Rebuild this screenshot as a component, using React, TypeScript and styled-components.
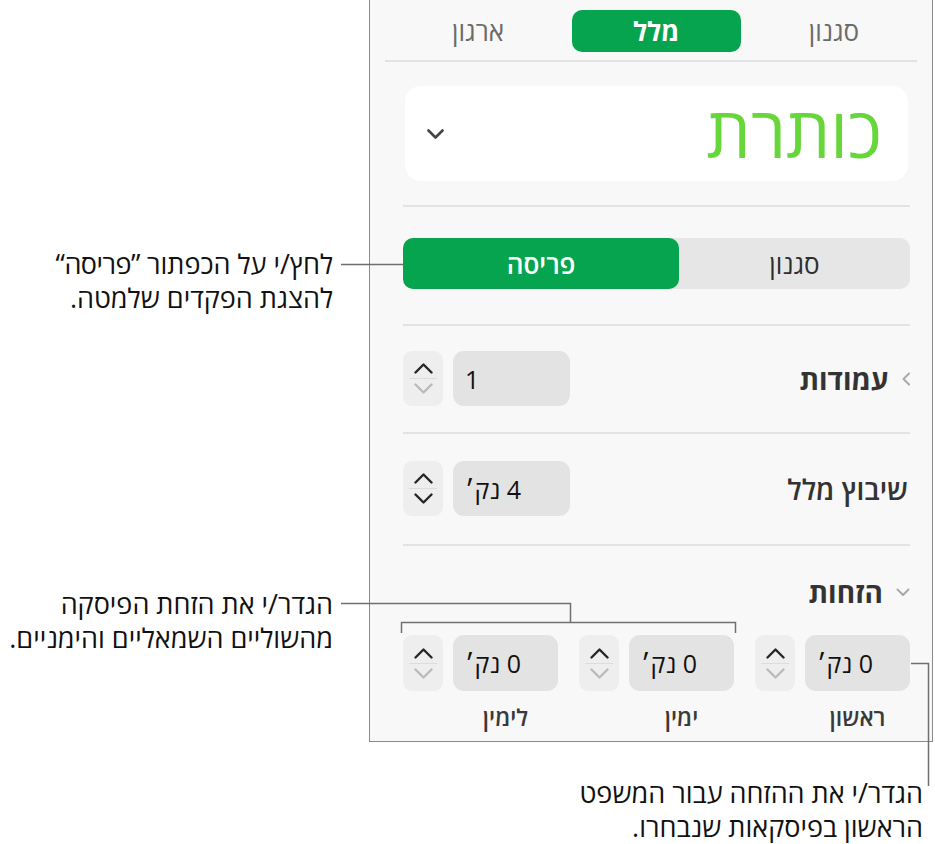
import React from "react";
import styled, { createGlobalStyle } from "styled-components";

const Global = createGlobalStyle`
  html, body { margin: 0; padding: 0; background: #ffffff; }
  body { font-family: "Open Sans", "Liberation Sans", "DejaVu Sans", sans-serif; }
`;

const Page = styled.div`
  position: relative;
  width: 935px;
  height: 844px;
  background: #ffffff;
  overflow: hidden;
`;

const Panel = styled.div`
  margin-left: 369px;
  width: 564px;
  height: 742px;
  box-sizing: border-box;
  background: #f8f8f8;
  border-left: 1.5px solid #8a8a8a;
  border-right: 1.5px solid #8a8a8a;
  border-bottom: 1.5px solid #8a8a8a;
  direction: rtl;
  display: flex;
  flex-direction: column;
  & > * { flex: none; }
`;

const TabBar = styled.div`
  display: grid;
  grid-template-columns: repeat(3, 169px);
  justify-content: center;
  column-gap: 9px;
  padding: 10px 0 0 10px;
`;

const Tab = styled.div<{ $active?: boolean }>`
  height: 42px;
  border-radius: 10px;
  display: flex;
  align-items: center;
  justify-content: center;
  font-size: 26px;
  font-weight: ${(p) => (p.$active ? 700 : 400)};
  color: ${(p) => (p.$active ? "#ffffff" : "#6b6b6b")};
  background: ${(p) => (p.$active ? "#07a44f" : "transparent")};
`;

const Rule = styled.div<{ $top: number; $side?: number }>`
  height: 2px;
  background: #e3e3e3;
  margin-top: ${(p) => p.$top}px;
  margin-left: ${(p) => p.$side ?? 0}px;
  margin-right: ${(p) => p.$side ?? 0}px;
  flex: none;
`;

const TitleCard = styled.div`
  margin: 24px 24px 0 35px;
  height: 95px;
  background: #ffffff;
  border-radius: 16px;
  display: flex;
  align-items: center;
  justify-content: space-between;
  padding: 0 26px 0 22px;
  box-sizing: border-box;
`;

const TitleText = styled.div`
  font-size: 70px;
  font-weight: 400;
  color: #66d63a;
  line-height: 1;
  margin-top: -6px;
`;

const Section = styled.div`
  padding: 0 22px 0 33px;
  display: flex;
  flex-direction: column;
  & > * { flex: none; }
`;

const Segmented = styled.div`
  margin-top: 31px;
  height: 51px;
  display: grid;
  grid-template-columns: 231px 1fr;
  background: #e6e6e6;
  border-radius: 10px;
`;

const Segment = styled.div<{ $active?: boolean }>`
  display: flex;
  align-items: center;
  justify-content: center;
  border-radius: 10px;
  font-size: 26px;
  font-weight: ${(p) => (p.$active ? 600 : 400)};
  color: ${(p) => (p.$active ? "#ffffff" : "#2e2e2e")};
  background: ${(p) => (p.$active ? "#07a44f" : "transparent")};
`;

const Row = styled.div<{ $top: number }>`
  margin-top: ${(p) => p.$top}px;
  height: 55px;
  display: flex;
  align-items: center;
  justify-content: space-between;
`;

const Label = styled.div`
  display: flex;
  align-items: center;
  gap: 13px;
  font-size: 28px;
  font-weight: 700;
  color: #333333;
`;

const LabelPlain = styled(Label)`
  font-weight: 600;
  margin-right: 2px;
`;

const Control = styled.div`
  display: flex;
  align-items: stretch;
  gap: 10px;
  height: 55px;
  direction: ltr;
`;

const Stepper = styled.div`
  width: 40px;
  background: #eeeeee;
  border-radius: 9px;
  display: flex;
  flex-direction: column;
  align-items: center;
  justify-content: center;
`;

const StepDivider = styled.div`
  width: 28px;
  height: 1px;
  background: #dcdcdc;
  margin: 4px 0;
`;

const Field = styled.div<{ $w: number }>`
  width: ${(p) => p.$w}px;
  background: #e3e3e3;
  border-radius: 11px;
  display: flex;
  align-items: center;
  padding-left: 12px;
  box-sizing: border-box;
  font-size: 25px;
  color: #111111;
`;

const Value = styled.span`
  direction: rtl;
  unicode-bidi: isolate;
`;

const IndentHeader = styled.div`
  margin-top: 31px;
  height: 30px;
  display: flex;
  align-items: center;
`;

const IndentGrid = styled.div`
  margin-top: 28px;
  display: flex;
  justify-content: space-between;
`;

const IndentCol = styled.div`
  display: flex;
  flex-direction: column;
  align-items: flex-start;
`;

const IndentControl = styled(Control)`
  height: 56px;
`;

const SubLabel = styled.div`
  width: 105px;
  text-align: center;
  margin-top: 10px;
  font-size: 23px;
  font-weight: 600;
  color: #3a3a3a;
`;

const Note = styled.div<{ $right: number; $top: number }>`
  position: absolute;
  right: ${(p) => p.$right}px;
  top: ${(p) => p.$top}px;
  direction: rtl;
  text-align: right;
  font-size: 27px;
  line-height: 34px;
  color: #111111;
  white-space: nowrap;
`;

const Quoted = styled.span`
  letter-spacing: -0.5px;
`;

const Leaders = styled.svg`
  position: absolute;
  left: 0;
  top: 0;
  pointer-events: none;
`;

type ChevronDir = "up" | "down" | "left";

const Chevron = ({ dir, color, size = 16, stroke = 2.4 }: { dir: ChevronDir; color: string; size?: number; stroke?: number }) => {
  const h = size / 2;
  let d = "";
  if (dir === "up") d = `M1.5 ${h} L${size / 2} 1.5 L${size - 1.5} ${h}`;
  if (dir === "down") d = `M1.5 1.5 L${size / 2} ${h} L${size - 1.5} 1.5`;
  if (dir === "left") d = `M${h} 1.5 L1.5 ${size / 2} L${h} ${size - 1.5}`;
  const w = dir === "left" ? h + 1.5 : size;
  const hh = dir === "left" ? size : h + 1.5;
  return (
    <svg width={w} height={hh} viewBox={`0 0 ${w} ${hh}`}>
      <path d={d} fill="none" stroke={color} strokeWidth={stroke} strokeLinecap="round" strokeLinejoin="round" />
    </svg>
  );
};

const StepperBox = ({ downEnabled }: { downEnabled?: boolean }) => (
  <Stepper>
    <Chevron dir="up" color="#262626" size={19} />
    <StepDivider />
    <Chevron dir="down" color={downEnabled ? "#262626" : "#bababa"} size={19} />
  </Stepper>
);

const indents = ["ראשון", "ימין", "לימין"];

export default function App() {
  return (
    <Page>
      <Global />
      <Panel>
        <TabBar>
          <Tab>סגנון</Tab>
          <Tab $active>מלל</Tab>
          <Tab>ארגון</Tab>
        </TabBar>
        <Rule $top={8} $side={15} />
        <TitleCard>
          <TitleText>כותרת</TitleText>
          <Chevron dir="down" color="#444444" size={17} stroke={2.6} />
        </TitleCard>
        <Section>
          <Rule $top={24} />
          <Segmented>
            <Segment>סגנון</Segment>
            <Segment $active>פריסה</Segment>
          </Segmented>
          <Rule $top={35} />
          <Row $top={25}>
            <Label>
              <Chevron dir="left" color="#a9a9a9" size={14} stroke={2} />
              עמודות
            </Label>
            <Control>
              <StepperBox />
              <Field $w={117}>
                <Value>1</Value>
              </Field>
            </Control>
          </Row>
          <Rule $top={26} />
          <Row $top={27}>
            <LabelPlain>שיבוץ מלל</LabelPlain>
            <Control>
              <StepperBox downEnabled />
              <Field $w={117}>
                <Value>4 נק׳</Value>
              </Field>
            </Control>
          </Row>
          <Rule $top={28} />
          <IndentHeader>
            <Label>
              <Chevron dir="down" color="#a9a9a9" size={14} stroke={2} />
              הזחות
            </Label>
          </IndentHeader>
          <IndentGrid>
            {indents.map((label) => (
              <IndentCol key={label}>
                <IndentControl>
                  <StepperBox />
                  <Field $w={105}>
                    <Value>0 נק׳</Value>
                  </Field>
                </IndentControl>
                <SubLabel>{label}</SubLabel>
              </IndentCol>
            ))}
          </IndentGrid>
        </Section>
      </Panel>

      <Note $right={602} $top={247}>
        לחץ/י על הכפתור <Quoted>”פריסה“</Quoted>
        <br />
        להצגת הפקדים שלמטה.
      </Note>
      <Note $right={602} $top={587}>
        הגדר/י את הזחת הפיסקה
        <br />
        מהשוליים השמאליים והימניים.
      </Note>
      <Note $right={12} $top={776}>
        הגדר/י את ההזחה עבור המשפט
        <br />
        הראשון בפיסקאות שנבחרו.
      </Note>

      <Leaders width={935} height={844} viewBox="0 0 935 844">
        <g fill="none" stroke="#6f6f6f" strokeWidth={1.5}>
          <path d="M341 264.5 H403" />
          <path d="M341 603.5 H570.5 V622.5" />
          <path d="M401.5 633 V622.5 H735.5 V633" />
          <path d="M911 663.5 H928.5 V786" />
        </g>
      </Leaders>
    </Page>
  );
}
